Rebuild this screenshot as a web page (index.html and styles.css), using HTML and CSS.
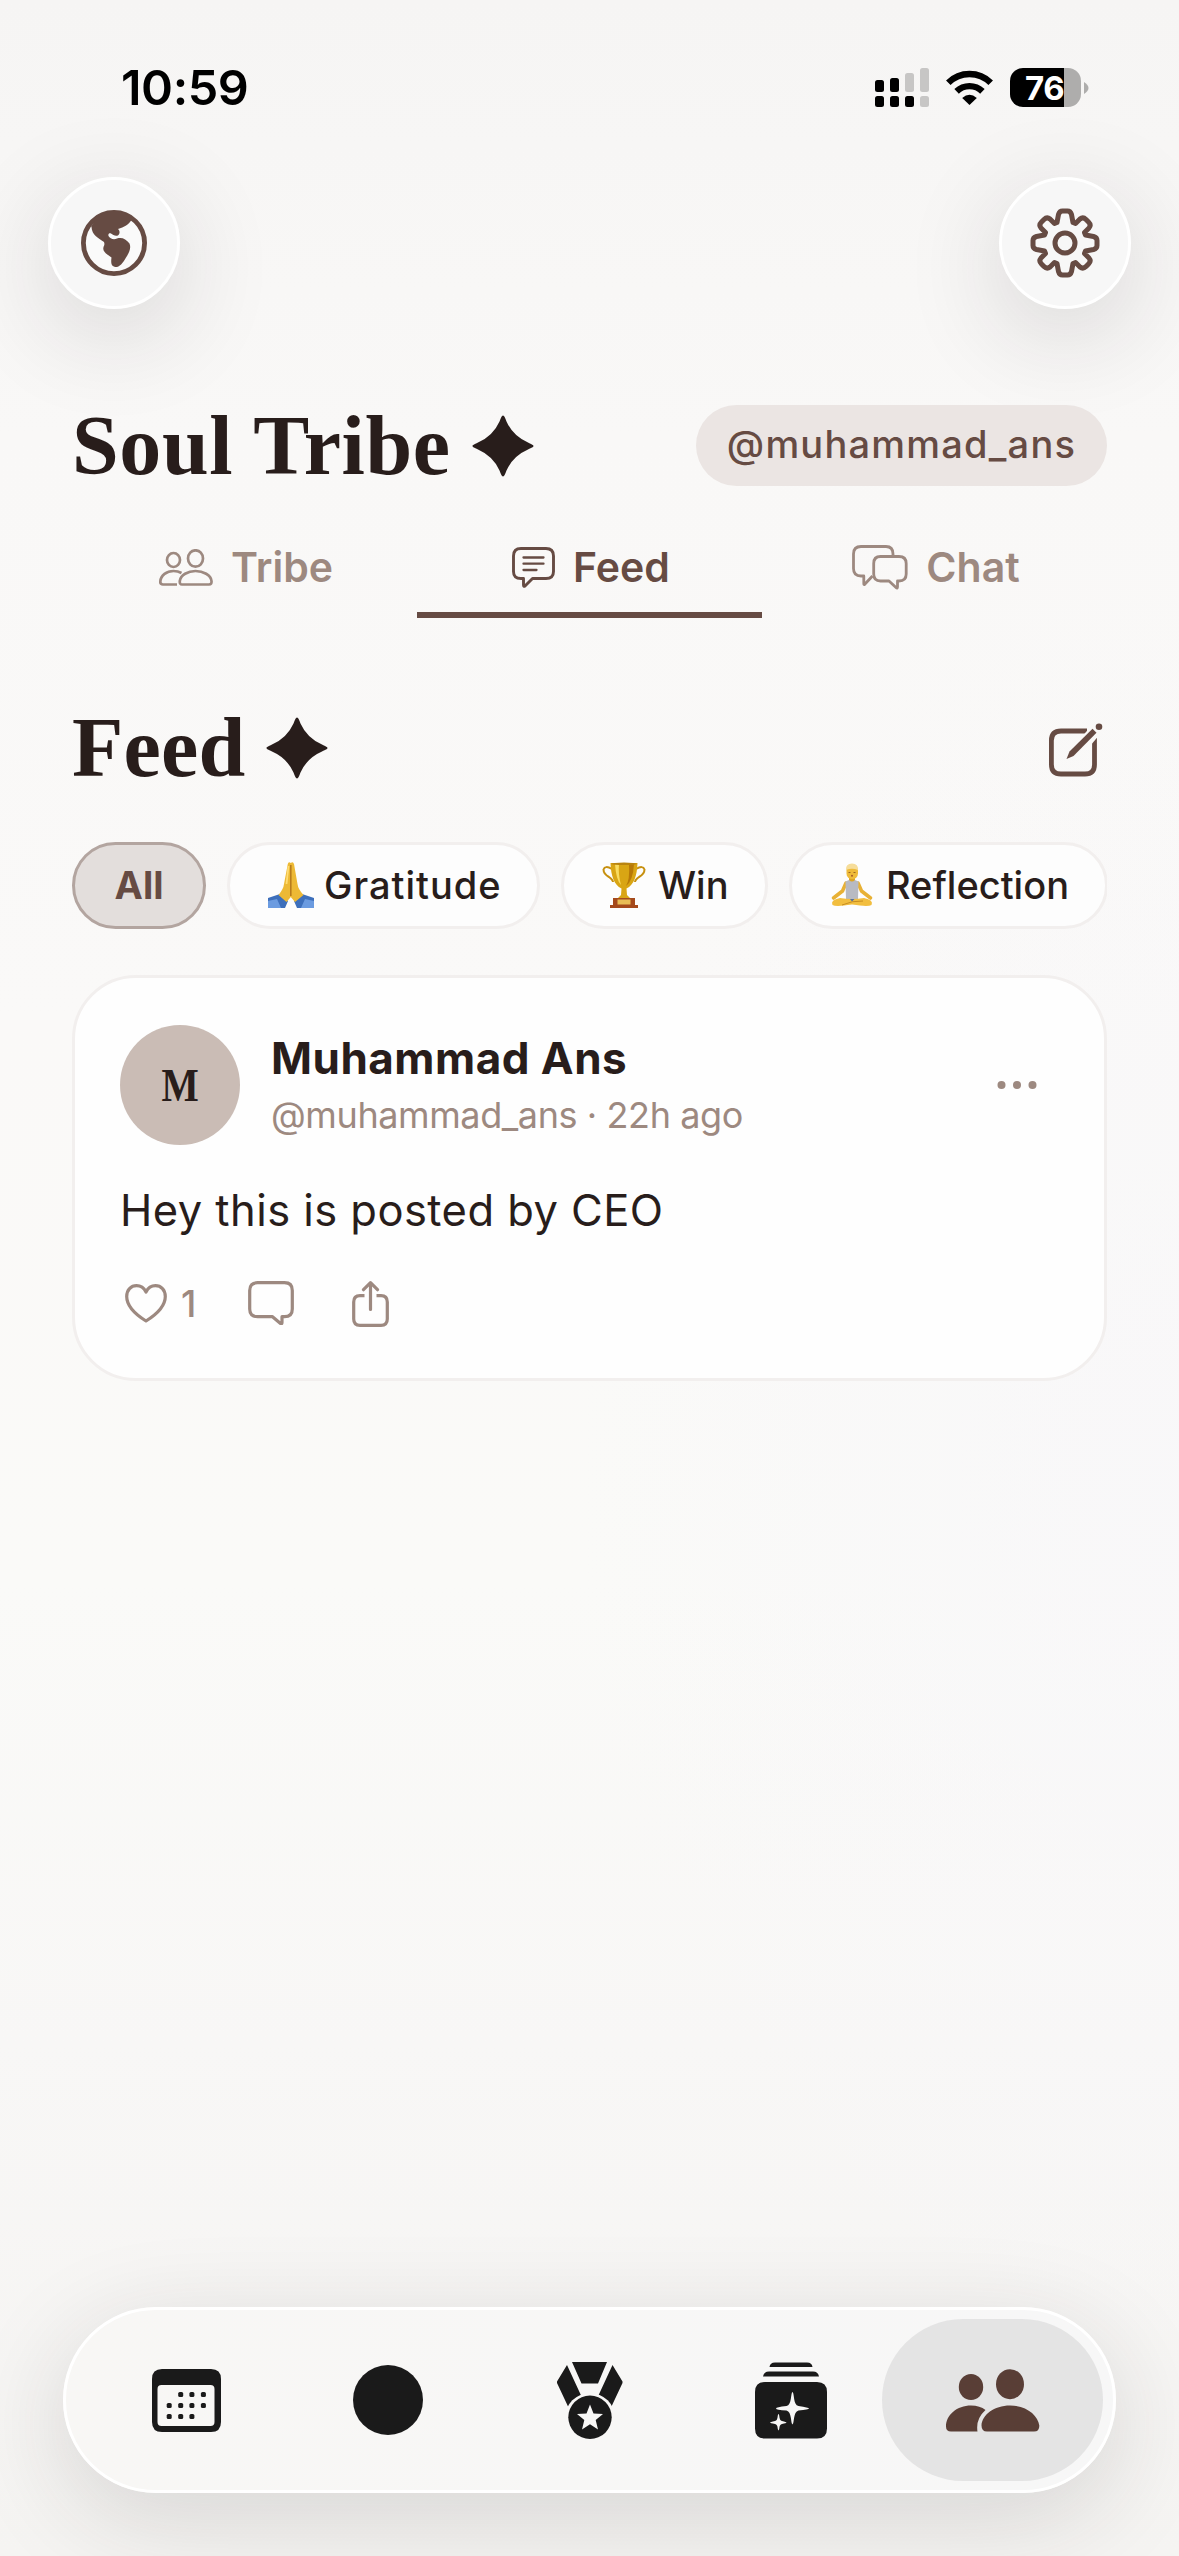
FILE: index.html
```html
<!DOCTYPE html>
<html lang="en">
<head>
<meta charset="utf-8">
<title>Soul Tribe</title>
<link rel="stylesheet" href="styles.css">
</head>
<body>
<div class="screen">
  <header class="status">
    <span class="time">10:59</span>
    <div class="status-icons">
      <svg class="signal" width="54" height="39" viewBox="0 0 54 39">
        <g fill="#000"><rect x="0" y="12" width="9" height="12" rx="2.5"/><rect x="15" y="10" width="9" height="14" rx="2.5"/><rect x="0" y="28" width="9" height="11" rx="2.5"/><rect x="15" y="28" width="9" height="11" rx="2.5"/><rect x="30" y="28" width="9" height="11" rx="2.5"/></g>
        <g fill="#c7c6c5"><rect x="30" y="5" width="9" height="19" rx="2.5"/><rect x="45" y="0" width="9" height="24" rx="2.5"/><rect x="45" y="28" width="9" height="11" rx="2.5"/></g>
      </svg>
      <svg class="wifi" width="47" height="35" viewBox="0 0 47 35">
        <g fill="none" stroke="#000" stroke-width="6.4"><path d="M2.3 12.7A30 30 0 0 1 44.7 12.7"/><path d="M10.6 21.4A18.4 18.4 0 0 1 36.4 21.4"/></g>
        <path d="M16.2 28Q23.500 21.500 30.800 28L23.500 35Z"/>
      </svg>
      <span class="battery"><span class="level">76</span></span>
      <svg class="nub" width="5" height="12" viewBox="0 0 5 12"><path d="M0 0Q4.500 3 4.500 6T0 12Z" fill="#aeadac"/></svg>
    </div>
  </header>

  <div class="toolbar">
    <span class="round">
      <svg width="66" height="66" viewBox="0 0 66 66">
        <circle cx="33" cy="33" r="30.600" fill="#fafafa" stroke="#664b43" stroke-width="4.800"/>
        <path fill="#664b43" d="M10 17C17 4 26 1 33 1C41 1 47 4 51 9C48 15 43 17 37 19C39 21 39 23 37.500 25C35 27 32 25 30 23.500C28 23 27 24 27.500 26C29 29 33 30 36 28.500C41 27 45 29 48.500 33.500C50 37 49 41 46 46C43 51 40 56 36 57C31 57 29.500 55 30.500 47.500C26 44 22 42 22.300 38C23 35 24 35 23 32C17 28 11 25 10.500 17Z"/>
      </svg>
    </span>
    <span class="round">
      <svg width="70" height="70" viewBox="-35 -35 70 70" fill="none" stroke="#664b43" stroke-width="5" stroke-linejoin="round">
        <circle r="10"/>
        <path d="M-6.500-28.500Q-5.500-32-2.500-32H2.500Q5.500-32 6.500-28.500L8-20.500L10.500-19.500L15-24Q18-26.500 21-23.500L23.500-21Q26.500-18 24-15L19.500-10.500L20.500-8L28.500-6.500Q32-5.500 32-2.500V2.500Q32 5.500 28.500 6.500L20.500 8L19.500 10.500L24 15Q26.500 18 23.500 21L21 23.500Q18 26.500 15 24L10.500 19.500L8 20.500L6.500 28.500Q5.500 32 2.500 32H-2.500Q-5.500 32-6.500 28.500L-8 20.500L-10.500 19.500L-15 24Q-18 26.500-21 23.500L-23.500 21Q-26.500 18-24 15L-19.500 10.500L-20.500 8L-28.500 6.500Q-32 5.500-32 2.500V-2.500Q-32-5.500-28.500-6.500L-20.500-8L-19.500-10.500L-24-15Q-26.500-18-23.500-21L-21-23.500Q-18-26.500-15-24L-10.500-19.500L-8-20.500Z"/>
      </svg>
    </span>
  </div>

  <main class="content">
    <div class="heading">
      <h1 class="title title-main">Soul Tribe</h1>
      <svg class="star" width="62" height="62" viewBox="0 0 62 62"><path d="M31 .5C32.500 .5 33 3 34.500 6.500Q41 21 56 27.500C60 29.500 61.500 30 61.500 31S60 32.500 56 34.500Q41 41 34.500 55.500C33 59 32.500 61.500 31 61.500S29 59 27.500 55.500Q21 41 6 34.500C2 32.500 .5 32 .5 31S2 29.500 6 27.500Q21 21 27.500 6.500C29 3 29.500 .5 31 .5Z"/></svg>
      <span class="handle-pill"><span class="handle-text">@muhammad_ans</span></span>
    </div>

    <nav class="tabs">
      <span class="tab">
        <svg width="54" height="37" viewBox="0 0 54 37" fill="none" stroke="#9d8980" stroke-width="2.700" stroke-linejoin="round"><ellipse cx="14.500" cy="11" rx="6.500" ry="7"/><ellipse cx="36.500" cy="9.500" rx="7.500" ry="8.200"/><path d="M18 35.500H4Q1.300 35.500 1.300 33C1.500 26 8 22 14.500 22Q19 22 22.500 24M23 35.500Q20.500 35.500 20.800 32C21.500 26 29 22 36.500 22S52 26 52.500 32Q52.800 35.500 50 35.500Z"/></svg>
        <span class="tab-label">Tribe</span>
      </span>
      <span class="tab active">
        <svg width="43" height="41" viewBox="0 0 43 41" fill="none" stroke="#664b43" stroke-width="2.900" stroke-linejoin="round" stroke-linecap="round"><path d="M9 1.500H34Q41.500 1.500 41.500 9V24.500Q41.500 31.500 34 31.500H20.500L13 39Q11.500 40 11.500 38V31.500H9Q1.500 31.500 1.500 24.500V9Q1.500 1.500 9 1.500Z"/><path d="M11.500 10.500H31.500M11.500 16.700H31.500M11.500 23H24.500" stroke-width="2.300"/></svg>
        <span class="tab-label">Feed</span>
      </span>
      <span class="tab">
        <svg width="56" height="45" viewBox="0 0 56 45" fill="none" stroke="#9d8980" stroke-width="2.800" stroke-linejoin="round"><path d="M20.500 31L12.500 39.500Q11.800 40 11.800 38.500V31H9Q1.500 31 1.500 23.500V9Q1.500 1.500 9 1.500H34Q41 1.500 41 9V11"/><path d="M28.500 11.500H47Q54.200 11.500 54.200 18.500V29Q54.200 36 47 36H45.500V42Q45.500 44 44 42.500L37 36H28.500Q21.700 36 21.700 29V18.500Q21.700 11.500 28.500 11.500Z"/></svg>
        <span class="tab-label">Chat</span>
      </span>
    </nav>

    <div class="heading section-heading">
      <h2 class="title title-feed">Feed</h2>
      <svg class="star" width="62" height="62" viewBox="0 0 62 62"><path d="M31 .5C32.500 .5 33 3 34.500 6.500Q41 21 56 27.500C60 29.500 61.500 30 61.500 31S60 32.500 56 34.500Q41 41 34.500 55.500C33 59 32.500 61.500 31 61.500S29 59 27.500 55.500Q21 41 6 34.500C2 32.500 .5 32 .5 31S2 29.500 6 27.500Q21 21 27.500 6.500C29 3 29.500 .5 31 .5Z"/></svg>
      <svg class="compose" width="54" height="54" viewBox="0 0 54 54"><path d="M38 8H12Q2.400 8 2.400 17.500V41.500Q2.400 51 12 51H36Q45.500 51 45.500 41.500V15" fill="none" stroke="#664b43" stroke-width="4.800"/><path d="M31 16L43 2L52 10L41 23Z" fill="#faf9f8"/><path d="M17.500 36L20.500 28.500L43.500 5.800L47.500 9.800L24.500 33Z" fill="#664b43"/><circle cx="50" cy="3.800" r="3.300" fill="#664b43"/></svg>
    </div>

    <div class="chips">
      <span class="chip chip-all"><span>All</span></span>
      <span class="chip chip-gratitude">
        <svg width="46" height="46" viewBox="0 0 46 46"><path d="M0 36L12 32L20 39L17 46H0ZM46 36L34 32L26 39L29 46H46Z" fill="#3d6fbb"/><path d="M0 39L9 37L13 46H0ZM46 39L37 37L33 46H46Z" fill="#6b9be0"/><path d="M22.800 1Q20.500-1 19.800 2L16 22Q15.500 27 10.500 33L18.500 40L22.800 35L27 40L35.500 33Q30 27 29.500 22L26 2Q25-1 22.800 1Z" fill="#edb935"/><path d="M22.800 3V34" stroke="#b87c1d" stroke-width="1.600"/><path d="M20.500 4L18.500 22" stroke="#ffdc73" stroke-width="1.800"/></svg>
        <span class="t-gratitude">Gratitude</span>
      </span>
      <span class="chip chip-win">
        <svg width="44" height="46" viewBox="0 0 44 46"><path d="M10 7Q3 3 1.500 7.500Q1.500 12 7 15Q11 18 11 20M34 7Q41 3 42.500 7.500Q42.500 12 37 15Q33 18 33 20" fill="none" stroke="#c7900f" stroke-width="2"/><path d="M8.500 1H35.500C35 14 32 23 24.500 26.500L25 33L29 37H15L19 33L19.500 26.500C12 23 9 14 8.500 1Z" fill="#d9a514"/><path d="M13 2Q14 18 19 23Q16 12 17 2Z" fill="#f9dc60"/><path d="M27 2Q28 18 24 24Q31 19 32 2Z" fill="#b87908"/><ellipse cx="22" cy="1.800" rx="13" ry="1.300" fill="#b98410"/><path d="M11 36H33V43H36V46H8V43H11Z" fill="#a54a1c"/><path d="M15.500 37.500H28.500V42.500H15.500Z" fill="#e9bd55"/></svg>
        <span>Win</span>
      </span>
      <span class="chip chip-reflection">
        <svg width="44" height="44" viewBox="0 0 44 44"><path d="M19 13H25V20H19Z" fill="#dda526"/><path d="M16 20L12.500 28L3.500 35M28 20L31.500 28L40.500 35" fill="none" stroke="#e8b135" stroke-width="3.600" stroke-linecap="round" stroke-linejoin="round"/><path d="M15.500 18.500L19 17Q22 20 25 17L28.500 18.500L28 36H16Z" fill="#b8bac2"/><path d="M10 35Q22 37 34 35Q44 37 41.500 42Q38 44 22 41.500Q6 44 2.500 42Q0 37 10 35Z" fill="#f2be3f"/><path d="M12 42Q22 37.500 33 38" stroke="#c88d20" fill="none"/><path d="M20 36H24.500L22 38.500Z" fill="#54709d"/><rect x="16.500" y="2" width="11.500" height="14" rx="5.500" fill="#efbb3a"/><path d="M16 7Q15.500 .5 22 .5Q28.500 .5 28 7Q22 4.500 16 7Z" fill="#f6dd9a"/><path d="M18.500 9.500H20.500M23.500 9.500H25.500" stroke="#9c6720"/><circle cx="22" cy="12.800" r="1" fill="#a55c29"/></svg>
        <span>Reflection</span>
      </span>
    </div>

    <article class="card">
      <div class="post-head">
        <span class="avatar"><span class="initial">M</span></span>
        <div class="who">
          <span class="name">Muhammad Ans</span>
          <span class="meta">@muhammad_ans · 22h ago</span>
        </div>
        <svg class="dots" width="40" height="8" viewBox="0 0 40 8" fill="#9d8980"><circle cx="4.500" cy="4" r="4"/><circle cx="20" cy="4" r="4"/><circle cx="35.500" cy="4" r="4"/></svg>
      </div>
      <p class="message">Hey this is posted by CEO</p>
      <div class="actions">
        <svg width="42" height="39" viewBox="0 0 42 39" fill="none" stroke="#9d8980" stroke-width="3.200" stroke-linejoin="round"><path d="M21 37C13 32 1.700 23 1.700 12.500C1.700 6 6 1.700 11.500 1.700C16 1.700 19 4 21 8C23 4 26 1.700 30.500 1.700C36 1.700 40.300 6 40.300 12.500C40.300 23 29 32 21 37Z"/></svg>
        <span class="likes">1</span>
        <svg class="comment" width="46" height="44" viewBox="0 0 46 44" fill="none" stroke="#9d8980" stroke-width="3.200" stroke-linejoin="round"><path d="M9.500 1.700H36.500Q44.300 1.700 44.300 9.500V28Q44.300 35.700 36.500 35.700H34V41.500Q34 43.500 32.500 42.500L24.500 35.700H9.500Q1.700 35.700 1.700 28V9.500Q1.700 1.700 9.500 1.700Z"/></svg>
        <svg class="share" width="37" height="46" viewBox="0 0 37 46" fill="none" stroke="#9d8980" stroke-width="3.200" stroke-linecap="round" stroke-linejoin="round"><path d="M12.500 14.700H8Q1.700 14.700 1.700 21V38Q1.700 44.300 8 44.300H29Q35.300 44.300 35.300 38V21Q35.300 14.700 29 14.700H24.500" stroke-linecap="butt"/><path d="M18.500 28.500V2M11.500 8.700L18.500 1.700L25.500 8.700"/></svg>
      </div>
    </article>
  </main>

  <nav class="dock">
    <span class="dock-item">
      <svg width="69" height="63" viewBox="0 0 69 63" fill="#1a1a1a"><path fill-rule="evenodd" d="M10 0H59Q69 0 69 10V53Q69 63 59 63H10Q0 63 0 53V10Q0 0 10 0ZM9.500 16Q5.500 16 5.500 20V53Q5.500 57 9.500 57H58.500Q62.500 57 62.500 53V20Q62.500 16 58.500 16Z"/><g><rect x="26.200" y="23" width="5" height="5" rx="1.600"/><rect x="37.400" y="23" width="5" height="5" rx="1.600"/><rect x="48.900" y="23" width="5" height="5" rx="1.600"/><rect x="14.700" y="34" width="5" height="5" rx="1.600"/><rect x="26.200" y="34" width="5" height="5" rx="1.600"/><rect x="37.400" y="34" width="5" height="5" rx="1.600"/><rect x="48.900" y="34" width="5" height="5" rx="1.600"/><rect x="14.700" y="45" width="5" height="5" rx="1.600"/><rect x="26.200" y="45" width="5" height="5" rx="1.600"/><rect x="37.400" y="45" width="5" height="5" rx="1.600"/></g></svg>
    </span>
    <span class="dock-item"><svg width="70" height="70" viewBox="0 0 70 70"><circle cx="35" cy="35" r="35" fill="#1a1a1a"/></svg></span>
    <span class="dock-item">
      <svg width="66" height="77" viewBox="0 0 66 77" fill="#1a1a1a"><path d="M15 0H50L41 21.500H24.500ZM10 3L25 35.500Q16 38 11.500 45.500L0 21V19.500ZM55.500 3L40.500 35.500Q49.500 38 54 45.500L65.500 21V19.500Z"/><path fill-rule="evenodd" d="M33 38.500A21.700 19 0 1 1 32.900 38.500Z" fill="none"/><circle cx="33" cy="56" r="25" fill="#f8f7f6"/><circle cx="33" cy="55.300" r="21.700"/><path d="M33 42.500L36.500 51.500L46 52L38.700 58L41 67.500L33 62.300L25 67.500L27.300 58L20 52L29.500 51.500Z" fill="#f8f7f6"/></svg>
    </span>
    <span class="dock-item">
      <svg width="72" height="77" viewBox="0 0 72 77" fill="#1a1a1a"><path d="M14.500 5Q15 .5 20 .5H52Q57 .5 57.500 5ZM8 14.500Q9 9.500 14 9.500H58Q63 9.500 64 14.500Z"/><path fill-rule="evenodd" d="M10 20H62Q72 20 72 30V66.500Q72 76.500 62 76.500H10Q0 76.500 0 66.500V30Q0 20 10 20ZM37.500 30C35.500 31 37 43 31.500 44Q21 45 21 46.500T31.500 48.500C37 50 35.500 61 37.500 62.500C39.500 61 38 50 43.500 48.500Q54 47.500 54 46.500T43.500 44C38 43 39.500 31 37.500 30ZM23.500 52C22 53 23.500 58 20 59Q15 60 15 60.500T20 62C23.500 63 22 67 23.500 68.500C25 67 23.500 63 27 62Q31.500 61 31.500 60.500T27 59C23.500 58 25 53 23.500 52Z"/></svg>
    </span>
    <span class="dock-item selected">
      <svg width="94" height="63" viewBox="0 0 94 63" fill="#593e36"><ellipse cx="25" cy="18" rx="12.200" ry="13"/><ellipse cx="64" cy="15.200" rx="14" ry="15"/><path d="M31.500 62.500H5Q0 62.500 0 57.500C0 46 11 36.500 25 36.500Q34 36.500 39.500 41Q29.500 50 31.500 62.500ZM41 62.500Q35.500 62.500 35.500 56.500C36 46 48 36.500 64 36.500S92 46 93.300 56.500Q93.500 62.500 88 62.500Z"/></svg>
    </span>
  </nav>
</div>
</body>
</html>
```
FILE: styles.css
```css
* { box-sizing: border-box; }
body { margin: 0; }
svg { display: block; flex: none; }

.screen {
  width: 1179px;
  height: 2556px;
  display: flex;
  flex-direction: column;
  overflow: hidden;
  font-family: Inter, "Liberation Sans", sans-serif;
  color: #281d1b;
  background:
    radial-gradient(ellipse 600px 900px at 100% 58%, rgba(248, 247, 249, 0.8) 0%, rgba(248, 247, 249, 0) 100%),
    linear-gradient(180deg, #f6f5f4 0%, #f9f8f7 17%, #faf9f8 40%, #fafaf8 62%, #f8f7f6 80%, #f5f4f2 100%);
  white-space: nowrap;
}

.status {
  height: 177px;
  padding: 68px 90px 0 121px;
  display: flex;
  justify-content: space-between;
  align-items: flex-start;
}
.time { font-size: 48.5px; line-height: 40px; font-weight: 600; color: #000; letter-spacing: -0.4px; }
.status-icons { display: flex; align-items: center; }
.wifi { margin-left: 17px; }
.battery {
  width: 71px;
  height: 39px;
  margin-left: 17px;
  border-radius: 13px;
  overflow: hidden;
  background: linear-gradient(90deg, #000 54px, #aeadac 54px);
}
.level { display: block; padding-left: 15px; font-size: 33px; line-height: 40px; font-weight: 700; color: #fff; letter-spacing: -0.5px; }
.nub { margin-left: 3px; }

.toolbar { display: flex; justify-content: space-between; padding: 0 48px; height: 132px; flex: none; }
.round {
  width: 132px;
  height: 132px;
  border-radius: 50%;
  border: 3px solid #fff;
  background: #f7f7f7;
  display: flex;
  align-items: center;
  justify-content: center;
  box-shadow: 0 24px 100px rgba(40, 30, 35, 0.16);
}

.content { padding: 96px 72px 0; flex: 1; }
.heading { display: flex; align-items: center; height: 81px; }
.title {
  margin: 0;
  font-family: "Liberation Serif", serif;
  font-weight: 700;
  font-size: 84px;
  line-height: 81px;
}
.title-main { width: 400px; letter-spacing: 0.6px; }
.title-feed { width: 194px; letter-spacing: 0.2px; }
.star { fill: #281d1b; }
.handle-pill {
  width: 411px;
  height: 81px;
  margin-left: auto;
  border-radius: 41px;
  background: #ebe5e3;
  color: #664b43;
  display: flex;
  align-items: center;
  justify-content: center;
}
.handle-text { font-size: 38px; line-height: 79px; font-weight: 500; letter-spacing: 1.2px; margin-bottom: 2px; }

.tabs { display: grid; grid-template-columns: repeat(3, 1fr); height: 132px; }
.tab {
  display: flex;
  align-items: center;
  justify-content: center;
  gap: 18px;
  padding: 36px 0 0 3px;
  border-bottom: 6px solid transparent;
  color: #9d8980;
  font-weight: 600;
  font-size: 41px;
}
.tab.active { color: #664b43; border-color: #664b43; }

.section-heading { margin-top: 89px; }
.compose { margin: 5px 4px 0 auto; }

.chips { display: flex; gap: 21px; margin-top: 54px; overflow: hidden; height: 87px; }
.chip {
  flex: none;
  height: 87px;
  border: 3px solid #f2efee;
  border-radius: 44px;
  background: #fdfdfd;
  display: flex;
  align-items: center;
  padding: 0 0 1px 38px;
  gap: 12px;
  font-size: 38px;
  font-weight: 500;
}
.chip-all { width: 134px; padding: 0 0 1px; justify-content: center; background: #e3dedc; border-color: #b3a5a0; color: #664b43; font-weight: 700; }
.chip-gratitude { width: 313px; gap: 10px; }
.t-gratitude { letter-spacing: 1px; }
.chip-win { width: 207px; }
.chip-reflection { width: 319px; }

.card {
  height: 406px;
  margin-top: 46px;
  padding: 47px 67px 0 45px;
  border: 3px solid #f2efee;
  border-radius: 64px;
  background: #fefefe;
}
.post-head { display: flex; align-items: center; height: 120px; }
.avatar {
  width: 120px;
  height: 120px;
  border-radius: 50%;
  background: #cabcb5;
  display: flex;
  align-items: center;
  justify-content: center;
  font: 700 47px "Liberation Serif", serif;
}
.initial { transform: scaleX(0.84); }
.who { display: flex; flex-direction: column; margin-left: 31px; }
.name { font-size: 44px; line-height: 60px; font-weight: 700; letter-spacing: 0.5px; }
.meta { font-size: 36px; line-height: 54px; color: #9d8980; letter-spacing: -0.4px; }
.dots { margin-left: auto; }
.message { margin: 35px 0 0; font-size: 43.5px; line-height: 60px; letter-spacing: 0.45px; }
.actions { display: flex; align-items: center; height: 48px; margin-top: 39px; margin-left: 5px; color: #9d8980; }
.likes { font-size: 37px; font-weight: 500; margin-left: 14px; width: 14px; }
.comment { margin-left: 53px; }
.share { margin: 2px 0 0 58px; }

.dock {
  width: 1053px;
  height: 186px;
  margin: 0 0 63px 63px;
  flex: none;
  border: 3px solid #fff;
  border-radius: 93px;
  background: linear-gradient(90deg, #f8f7f5, #f7f7f7);
  box-shadow: 0 24px 100px rgba(40, 35, 35, 0.15);
  display: grid;
  grid-template-columns: repeat(5, 201.5px);
  justify-content: center;
  padding: 9px 0;
}
.dock-item { display: flex; align-items: center; justify-content: center; }
.selected { margin: 0 -10px; border-radius: 81px; background: #e4e4e4; }
```
